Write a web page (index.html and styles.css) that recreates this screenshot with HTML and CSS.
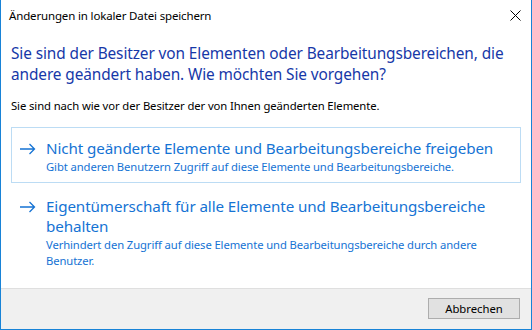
FILE: index.html
```html
<!DOCTYPE html>
<html lang="de">

<head>
  <meta charset="UTF-8" />
  <title>Änderungen in lokaler Datei speichern</title>
  <link rel="stylesheet" href="styles.css">
</head>

<body>
  <div class="window">
    <div class="titlebar">
      <span class="title">Änderungen in lokaler Datei speichern</span>
      <span class="close">
        <svg width="11" height="11" viewBox="0 0 11 11">
          <path d="M0.5 0.5 L10.5 10.5 M10.5 0.5 L0.5 10.5" stroke="#000" stroke-width="1" fill="none" />
        </svg>
      </span>
    </div>

    <div class="content">
      <h1 class="instruction">Sie sind der Besitzer von Elementen oder Bearbeitungsbereichen, die<br>andere geändert haben. Wie möchten Sie vorgehen?</h1>
      <p class="info">Sie sind nach wie vor der Besitzer der von Ihnen geänderten Elemente.</p>

      <div class="command hover">
        <span class="arrow">
          <svg width="16" height="12" viewBox="0 0 16 12">
            <path d="M0 6 H14.5 M9.5 1 L14.5 6 L9.5 11" stroke="currentColor" stroke-width="1.3" fill="none" />
          </svg>
        </span>
        <div class="command-text">
          <div class="command-title">Nicht geänderte Elemente und Bearbeitungsbereiche freigeben</div>
          <div class="command-note">Gibt anderen Benutzern Zugriff auf diese Elemente und Bearbeitungsbereiche.</div>
        </div>
      </div>

      <div class="command">
        <span class="arrow">
          <svg width="16" height="12" viewBox="0 0 16 12">
            <path d="M0 6 H14.5 M9.5 1 L14.5 6 L9.5 11" stroke="currentColor" stroke-width="1.3" fill="none" />
          </svg>
        </span>
        <div class="command-text">
          <div class="command-title">Eigentümerschaft für alle Elemente und Bearbeitungsbereiche<br>behalten</div>
          <div class="command-note">Verhindert den Zugriff auf diese Elemente und Bearbeitungsbereiche durch andere<br>Benutzer.</div>
        </div>
      </div>
    </div>

    <div class="footer">
      <button class="btn">Abbrechen</button>
    </div>
  </div>
</body>

</html>
```

FILE: styles.css
```css
:root {
  --accent: #1883d7;
  --instruction: #1638a8;
  --link: #1573d4;
}

html,
body {
  margin: 0;
  padding: 0;
}

body {
  width: 532px;
  height: 330px;
  font-family: 'Noto Sans', 'Open Sans', sans-serif;
  background-color: #fff;
}

.window {
  width: 532px;
  height: 330px;
  box-sizing: border-box;
  border: 1px solid var(--accent);
  border-top: none;
  display: flex;
  flex-direction: column;
  background-color: #fff;
}

/* Titelleiste */
.titlebar {
  height: 30px;
  display: flex;
  align-items: center;
  justify-content: space-between;
  padding: 0 10px 0 8px;
}

.title {
  font-size: 11.5px;
  color: #000;
  letter-spacing: -0.15px;
}

.close {
  display: flex;
  margin-top: 1px;
}

/* Inhalt */
.content {
  flex: 1;
  padding: 13px 10px 0 10px;
}

.instruction {
  margin: 0;
  font-size: 15.4px;
  font-weight: normal;
  line-height: 21px;
  color: var(--instruction);
  letter-spacing: -0.1px;
}

.info {
  margin: 13px 0 14px 0;
  font-size: 11.3px;
  line-height: 15px;
  color: #000;
  letter-spacing: -0.1px;
}

.command {
  display: flex;
  align-items: flex-start;
  gap: 10px;
  padding: 10px 8px 7px 8px;
  border: 1px solid transparent;
  color: var(--link);
  margin-bottom: 2px;
}

.command.hover {
  border-color: #bcdcf4;
}

.arrow {
  display: flex;
  padding-top: 5px;
}

.command-title {
  font-size: 15.2px;
  line-height: 20px;
  letter-spacing: -0.1px;
}

.command-note {
  margin-top: 1px;
  font-size: 11.25px;
  line-height: 16px;
  letter-spacing: -0.1px;
}

/* Fußzeile */
.footer {
  height: 41px;
  border-top: 1px solid #dfdfdf;
  background-color: #f0f0f0;
  display: flex;
  justify-content: flex-end;
  align-items: flex-start;
  padding: 9px 11px 0 0;
  box-sizing: border-box;
}

.btn {
  width: 92px;
  height: 21px;
  padding: 0;
  font-family: 'Noto Sans', 'Open Sans', sans-serif;
  font-size: 11.3px;
  color: #000;
  background-color: #e1e1e1;
  border: 1px solid #adadad;
  border-radius: 0;
}
```
